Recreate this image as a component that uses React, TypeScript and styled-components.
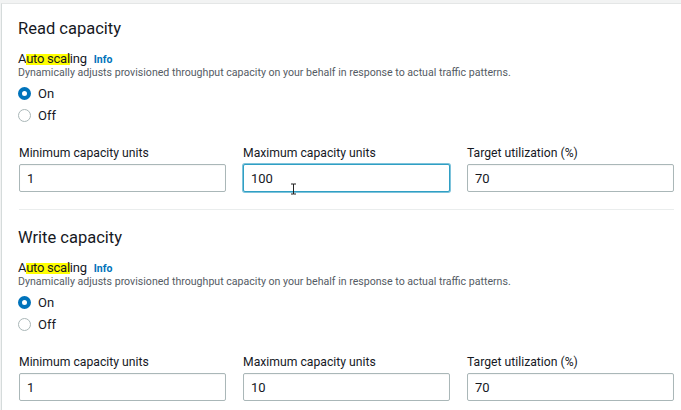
import styled, { createGlobalStyle } from "styled-components";

const GlobalStyle = createGlobalStyle`
  html, body {
    margin: 0;
    padding: 0;
    background: #f2f3f3;
  }
  body {
    font-family: Roboto, "Liberation Sans", Arial, sans-serif;
    color: #16191f;
  }
`;

interface Field {
  label: string;
  value: string;
  focused?: boolean;
}

interface SectionProps {
  title: string;
  fields: Field[];
}

const Section = ({ title, fields }: SectionProps) => (
  <SectionBox>
    <Heading>{title}</Heading>
    <LabelRow>
      <Label>
        A<Mark>uto scal</Mark>ing
      </Label>
      <Info>Info</Info>
    </LabelRow>
    <Description>
      Dynamically adjusts provisioned throughput capacity on your behalf in
      response to actual traffic patterns.
    </Description>
    <RadioGroup>
      <RadioRow>
        <Radio checked />
        <RadioText>On</RadioText>
      </RadioRow>
      <RadioRow>
        <Radio />
        <RadioText>Off</RadioText>
      </RadioRow>
    </RadioGroup>
    <FieldGrid>
      {fields.map((f) => (
        <FieldBox key={f.label}>
          <FieldLabel>{f.label}</FieldLabel>
          <InputWrap>
            <Input defaultValue={f.value} focused={f.focused} />
            {f.focused && (
              <Caret viewBox="0 0 7 12" width="7" height="12">
                <path
                  d="M1 1h2.5M3.5 1h2.5M3.5 1v10M1 11h2.5M3.5 11h2.5"
                  stroke="#222"
                  strokeWidth="1"
                  fill="none"
                />
              </Caret>
            )}
          </InputWrap>
        </FieldBox>
      ))}
    </FieldGrid>
  </SectionBox>
);

const App = () => (
  <>
    <GlobalStyle />
    <Page>
      <Panel>
        <Section
          title="Read capacity"
          fields={[
            { label: "Minimum capacity units", value: "1" },
            { label: "Maximum capacity units", value: "100", focused: true },
            { label: "Target utilization (%)", value: "70" },
          ]}
        />
        <Divider />
        <Section
          title="Write capacity"
          fields={[
            { label: "Minimum capacity units", value: "1" },
            { label: "Maximum capacity units", value: "10" },
            { label: "Target utilization (%)", value: "70" },
          ]}
        />
      </Panel>
    </Page>
  </>
);

export default App;

const Page = styled.div`
  padding-top: 3px;
  padding-left: 1px;
  height: 410px;
  box-sizing: border-box;
  overflow: hidden;
`;

const Panel = styled.div`
  background: #fff;
  border-top: 1px solid #e4e6e6;
  border-left: 1px solid #d5dbdb;
  padding: 0 8px 0 16px;
  min-height: 407px;
  box-sizing: border-box;
`;

const SectionBox = styled.div`
  padding-top: 13px;
`;

const Heading = styled.h2`
  margin: 0;
  font-size: 16.5px;
  font-weight: 400;
  line-height: 24px;
  color: #16191f;
`;

const LabelRow = styled.div`
  display: flex;
  align-items: baseline;
  gap: 7px;
  margin-top: 10px;
  line-height: 16px;
`;

const Label = styled.span`
  font-size: 13px;
  letter-spacing: -0.25px;
  color: #16191f;
`;

const Mark = styled.span`
  background: linear-gradient(to bottom, transparent 18%, #ffff00 18%, #ffff00 92%, transparent 92%);
`;

const Info = styled.span`
  font-size: 10.5px;
  font-weight: 700;
  color: #0073bb;
`;

const Description = styled.div`
  font-size: 10.6px;
  line-height: 13px;
  color: #545b64;
  margin-top: -2px;
`;

const RadioGroup = styled.div`
  display: flex;
  flex-direction: column;
  gap: 6px;
  margin-top: 6px;
`;

const RadioRow = styled.div`
  display: flex;
  align-items: center;
  gap: 7px;
  height: 16px;
`;

const Radio = styled.span<{ checked?: boolean }>`
  width: 13px;
  height: 13px;
  border-radius: 50%;
  box-sizing: border-box;
  border: ${({ checked }) =>
    checked ? "4px solid #0073bb" : "1px solid #aab7b8"};
  background: #fff;
`;

const RadioText = styled.span`
  font-size: 13px;
  color: #16191f;
`;

const FieldGrid = styled.div`
  display: grid;
  grid-template-columns: repeat(3, 207px);
  column-gap: 17px;
  margin-top: 23px;
  margin-left: 1px;
`;

const FieldBox = styled.div`
  display: flex;
  flex-direction: column;
  gap: 3px;
`;

const FieldLabel = styled.label`
  font-size: 12.2px;
  line-height: 15px;
  color: #16191f;
`;

const InputWrap = styled.div`
  position: relative;
`;

const Input = styled.input<{ focused?: boolean }>`
  width: 100%;
  height: 28px;
  box-sizing: border-box;
  padding: 0 7px;
  font-family: Roboto, "Liberation Sans", Arial, sans-serif;
  font-size: 13px;
  color: #16191f;
  border-radius: 2px;
  border: 1px solid ${({ focused }) => (focused ? "#2f9fc4" : "#aab7b8")};
  box-shadow: ${({ focused }) =>
    focused ? "0 0 0 1px #7ec3db" : "inset 0 1px 1px rgba(0,0,0,0.04)"};
  outline: none;
  background: #fff;
`;

const Caret = styled.svg`
  position: absolute;
  left: 47px;
  top: 19px;
`;

const Divider = styled.hr`
  border: none;
  border-top: 1px solid #eaeded;
  margin: 17px 0 3px 1px;
  width: 655px;
`;
